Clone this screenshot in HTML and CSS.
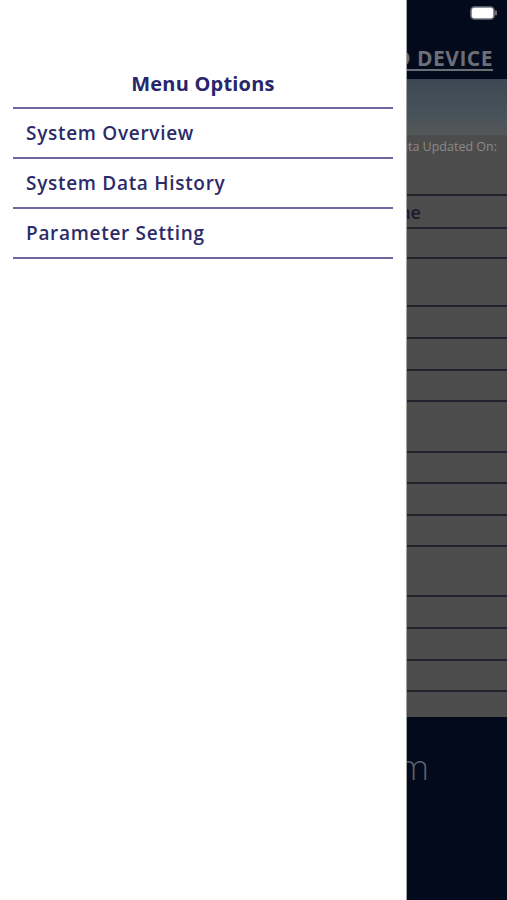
FILE: index.html
```html
<!DOCTYPE html>
<html lang="en">
<head>
<meta charset="utf-8">
<title>Menu</title>
<link rel="stylesheet" href="styles.css">
</head>
<body>
<div class="screen">
  <div class="page">
    <header class="topbar">
      <div class="status">
        <svg class="battery" width="28" height="14" viewBox="0 0 28 14">
          <rect x="1" y="1" width="23" height="12" rx="3.5" fill="#ffffff" stroke="#6f737c" stroke-width="1.6"/>
          <rect x="25" y="4.5" width="2" height="5" rx="1" fill="#6f737c"/>
        </svg>
      </div>
      <div class="title">CONNECTED DEVICE</div>
    </header>
    <div class="band"></div>
    <div class="updated">Last Data Updated On:</div>
    <div class="table">
      <div class="row r33"><span class="label">Device Name</span></div>
      <div class="row r30"></div>
      <div class="row r48"></div>
      <div class="row r32"></div>
      <div class="row r32"></div>
      <div class="row r31"></div>
      <div class="row r51"></div>
      <div class="row r31"></div>
      <div class="row r32"></div>
      <div class="row r31"></div>
      <div class="row r50"></div>
      <div class="row r32"></div>
      <div class="row r32"></div>
      <div class="row r31"></div>
      <div class="row r27"></div>
    </div>
    <footer class="footer"><span class="brand">www.system.com</span></footer>
  </div>
  <nav class="drawer">
    <h2 class="drawer-title">Menu Options</h2>
    <ul class="menu">
      <li class="menu-item">System Overview</li>
      <li class="menu-item">System Data History</li>
      <li class="menu-item">Parameter Setting</li>
    </ul>
  </nav>
</div>
</body>
</html>
```
FILE: styles.css
```css
* { box-sizing: border-box; }
html, body { margin: 0; padding: 0; }
body {
  width: 507px;
  height: 900px;
  overflow: hidden;
  font-family: "Open Sans", "DejaVu Sans", sans-serif;
}
.screen {
  position: relative;
  width: 507px;
  height: 900px;
  overflow: hidden;
}
.page {
  width: 507px;
  height: 900px;
  display: flex;
  flex-direction: column;
  background: #4c4c4c;
}
.topbar {
  height: 79px;
  background: #030a1c;
  display: flex;
  flex-direction: column;
}
.status {
  height: 44px;
  display: flex;
  justify-content: flex-end;
  padding: 6px 9px 0 0;
}
.battery { display: block; }
.title {
  text-align: right;
  padding-right: 14px;
  font-weight: 700;
  font-size: 21px;
  line-height: 28px;
  color: #6b6f78;
  text-decoration: underline;
  text-underline-offset: 3px;
  text-decoration-thickness: 2px;
  white-space: nowrap;
  letter-spacing: 0.5px;
}
.band {
  height: 56px;
  background: linear-gradient(#3c4954 0%, #46525a 60%, #545757 100%);
}
.updated {
  height: 25px;
  text-align: right;
  padding-right: 10px;
  font-size: 12.5px;
  line-height: 24px;
  color: #8b8b8b;
  white-space: nowrap;
}
.table {
  margin-top: 34px;
  display: flex;
  flex-direction: column;
}
.row {
  border-top: 2px solid #22222e;
  display: flex;
  align-items: center;
  justify-content: flex-end;
  padding-right: 86px;
}
.r27 { height: 27px; }
.r30 { height: 30px; }
.r31 { height: 31px; }
.r32 { height: 32px; }
.r33 { height: 33px; }
.r48 { height: 48px; }
.r50 { height: 50px; }
.r51 { height: 51px; }
.label {
  font-size: 18px;
  font-weight: 600;
  color: #191930;
  white-space: nowrap;
}
.footer {
  flex: 1;
  background: #030a1c;
  display: flex;
  justify-content: flex-end;
  padding: 27px 78px 0 0;
}
.brand {
  font-size: 35px;
  font-weight: 300;
  color: #5b606b;
  white-space: nowrap;
  line-height: 46px;
}
.drawer {
  position: absolute;
  left: 0;
  top: 0;
  width: 407px;
  height: 900px;
  background: #ffffff;
  border-right: 1px solid #a3a3a3;
  padding: 0 13px;
}
.drawer-title {
  margin: 0;
  padding-top: 70px;
  height: 109px;
  text-align: center;
  font-size: 20px;
  line-height: 28px;
  font-weight: 700;
  color: #27266a;
  letter-spacing: 0.2px;
  border-bottom: 2px solid #6a67a3;
}
.menu {
  list-style: none;
  margin: 0;
  padding: 0;
}
.menu-item {
  height: 50px;
  padding-left: 13px;
  display: flex;
  align-items: center;
  font-size: 19px;
  font-weight: 600;
  letter-spacing: 0.7px;
  color: #2c2b68;
  border-bottom: 2px solid #6a67a3;
}
```
